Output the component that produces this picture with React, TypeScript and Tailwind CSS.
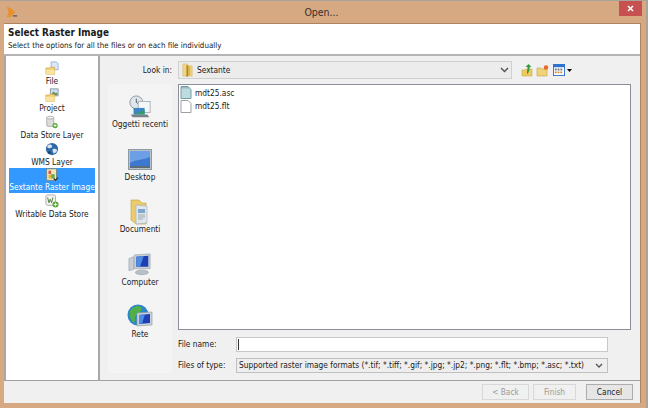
import React from 'react';

const FolderTall = ({ className = '' }: { className?: string }) => (
  <svg className={className} viewBox="0 0 14 15">
    <path d="M2 1h5l1 2h4v11H2z" fill="#f3d67f" stroke="#d6b55f" strokeWidth="0.6" />
    <path d="M6 2l4 2v9l-4 2z" fill="#dcb64e" />
    <path d="M6 2l1.500 1v11L6 15z" fill="#9a8440" />
  </svg>
);

const SidebarIcon = ({ kind }: { kind: string }) => {
  if (kind === 'file')
    return (
      <svg className="h-[14px] w-[14px]" viewBox="0 0 16 16">
        <path d="M7 1h6l2 2v7H7z" fill="#dbe8fa" stroke="#7f9fd0" strokeWidth="0.8" />
        <path d="M1 8h4l1-1h5v8H1z" fill="#f2cf73" stroke="#c9a23c" strokeWidth="0.7" />
        <path d="M1 10h10v5H1z" fill="#f9e3a0" />
      </svg>
    );
  if (kind === 'project')
    return (
      <svg className="h-[14px] w-[14px]" viewBox="0 0 16 16">
        <rect x="6" y="1" width="9" height="8" fill="#cfdcec" stroke="#6e7f95" strokeWidth="0.8" />
        <path d="M8 6l2-2 2 2 2-1v3H8z" fill="#5b8f5a" />
        <path d="M1 8h4l1-1h5v8H1z" fill="#f2cf73" stroke="#c9a23c" strokeWidth="0.7" />
        <path d="M1 10h10v5H1z" fill="#f9e3a0" />
      </svg>
    );
  if (kind === 'store')
    return (
      <svg className="h-[14px] w-[14px]" viewBox="0 0 16 16">
        <path d="M2 3v9c0 1.500 8 1.500 8 0V3z" fill="#dcdcdc" stroke="#9a9a9a" strokeWidth="0.8" />
        <ellipse cx="6" cy="3" rx="4" ry="1.600" fill="#f2f2f2" stroke="#9a9a9a" strokeWidth="0.8" />
        <circle cx="11.500" cy="12" r="3" fill="#5aa83c" />
        <path d="M9.800 12h3.400M11.500 10.300v3.400" stroke="#fff" strokeWidth="0.9" />
      </svg>
    );
  if (kind === 'wms')
    return (
      <svg className="h-[14px] w-[14px]" viewBox="0 0 16 16">
        <circle cx="8" cy="8" r="7" fill="#2f6aa8" />
        <path d="M3 4c2-2 4-1 5 0 1 2-1 3-3 3S2 6 3 4zM9 8c2-1 4 0 5 1-1 3-3 4-4 4-1-2-2-3-1-5z" fill="#d7e6f2" />
        <circle cx="5" cy="12" r="1.500" fill="#173f6e" />
      </svg>
    );
  if (kind === 'raster')
    return (
      <svg className="h-[14px] w-[14px]" viewBox="0 0 16 16">
        <rect x="2" y="1" width="11" height="13" fill="#f0e8b8" stroke="#7d7d60" strokeWidth="0.8" />
        <path d="M4 3h3v4H4z" fill="#d9534f" />
        <path d="M7 7h4v5H7z" fill="#67a84f" />
        <path d="M4 8h3v4H4z" fill="#e8b33c" />
        <path d="M10 12l2 2 3-3" stroke="#2d2d2d" strokeWidth="1.400" fill="none" />
      </svg>
    );
  return (
    <svg className="h-[14px] w-[14px]" viewBox="0 0 16 16">
      <rect x="1" y="1" width="11" height="12" rx="2" fill="#f2f2f2" stroke="#8f9a8f" strokeWidth="0.8" />
      <path d="M3 4l1.500 6L6 6l1.500 4L9 4" stroke="#4f7f3c" strokeWidth="1.100" fill="none" />
      <circle cx="12" cy="12" r="3.500" fill="#5aa83c" />
      <path d="M10 12h4M12 10v4" stroke="#fff" strokeWidth="1" />
    </svg>
  );
};

const PlaceIcon = ({ kind }: { kind: string }) => {
  if (kind === 'recent')
    return (
      <svg className="h-[24px] w-[26px]" viewBox="0 0 26 26">
        <circle cx="9" cy="8" r="7" fill="#dfe5ea" stroke="#8b949c" />
        <path d="M9 4v4l3 2" stroke="#4d5860" strokeWidth="1" fill="none" />
        <rect x="11" y="7" width="13" height="12" fill="#f4f7fa" stroke="#a9b2ba" />
        <path d="M6 14h12v7H6z" fill="#3f86c9" />
        <path d="M6 21l12-5v5z" fill="#2f9c6b" />
        <path d="M3 21h18l2 3H5z" fill="#77838c" />
      </svg>
    );
  if (kind === 'desktop')
    return (
      <svg className="h-[22px] w-6" viewBox="0 0 24 22">
        <rect x="0.500" y="0.500" width="23" height="20" fill="#b8c0c8" stroke="#8f99a3" />
        <rect x="2" y="2" width="20" height="15" fill="#3d78d0" />
        <path d="M2 2h20v6c-7 3-13 2-20 6z" fill="#6d9fe4" />
        <rect x="2" y="17" width="20" height="2" fill="#5d6b78" />
      </svg>
    );
  if (kind === 'docs')
    return (
      <svg className="h-[26px] w-6" viewBox="0 0 24 26">
        <path d="M3 1h8l3 3h4v21H8L3 21z" fill="#eccb6c" stroke="#c8a850" strokeWidth="0.7" />
        <path d="M8 6l11 1v17l-11 1z" fill="#dfe6ec" stroke="#aab4bc" strokeWidth="0.7" />
        <path d="M10 10h7v4h-7z" fill="#7fa6c9" />
        <path d="M10 16h7M10 18h7M10 20h5" stroke="#8d98a3" strokeWidth="0.8" />
      </svg>
    );
  if (kind === 'computer')
    return (
      <svg className="h-[24px] w-6" viewBox="0 0 24 26">
        <path d="M0 6l5-2v14l-5 1z" fill="#c8ced4" stroke="#8f99a3" strokeWidth="0.6" />
        <path d="M6 2l17-1v16L6 17z" fill="#c9d0d6" stroke="#8f99a3" strokeWidth="0.6" />
        <path d="M8 4l13-1v12L8 15z" fill="#1d3fb5" />
        <path d="M8 4l8-.500-4 11.300H8z" fill="#4f8be0" />
        <ellipse cx="14" cy="21" rx="7" ry="2.500" fill="#b9c0c6" stroke="#8f99a3" strokeWidth="0.6" />
      </svg>
    );
  return (
    <svg className="h-[26px] w-[26px]" viewBox="0 0 26 26">
      <circle cx="11" cy="11" r="10.500" fill="#2c86c9" />
      <path d="M3 7c3-5 8-6 11-4 2 3-1 6-4 7-3 3-1 6-3 9-3-2-5-7-4-12z" fill="#4fb04a" />
      <path d="M10 9l15-1v13l-15 1z" fill="#c9d0d6" stroke="#8f99a3" strokeWidth="0.6" />
      <path d="M12 11l11-1v9l-11 1z" fill="#1d3fb5" />
      <path d="M12 11l6-.500-3 9.300h-3z" fill="#4f8be0" />
    </svg>
  );
};

const sources = [
  { kind: 'file', label: 'File' },
  { kind: 'project', label: 'Project' },
  { kind: 'store', label: 'Data Store Layer' },
  { kind: 'wms', label: 'WMS Layer' },
  { kind: 'raster', label: 'Sextante Raster Image', selected: true },
  { kind: 'writable', label: 'Writable Data Store' },
];

const places = [
  { kind: 'recent', label: 'Oggetti recenti' },
  { kind: 'desktop', label: 'Desktop' },
  { kind: 'docs', label: 'Documenti' },
  { kind: 'computer', label: 'Computer' },
  { kind: 'net', label: 'Rete' },
];

export default function App() {
  return (
    <div className="flex h-[408px] w-[648px] flex-col overflow-hidden border-t border-r-2 border-[#a9a39c] bg-[#d7a982] pl-1 pr-[5px] pb-[5px] text-[8.300px] leading-none text-[#1a1a1a] [font-family:'DejaVu_Sans',sans-serif] [font-stretch:condensed]">
      {/* Title bar */}
      <div className="relative flex h-[22px] shrink-0 items-center justify-center pr-[2px] text-[10.500px] text-[#3a3028]">
        <svg className="absolute left-[2px] top-[5px] h-[12px] w-[12px]" viewBox="0 0 14 13">
          <path d="M1 0l6 3 4 4-3 2-2 3-5 1 2-6z" fill="#e8912d" />
          <path d="M8 10h5v2H8z" fill="#6f6f6f" />
        </svg>
        Open...
        <div className="absolute -right-[1px] -top-[1px] flex h-[16px] w-[23px] items-center justify-center bg-[#c75050]">
          <svg className="h-[7px] w-[7px]" viewBox="0 0 7 7">
            <path d="M1 1l5 5M6 1L1 6" stroke="#fff" strokeWidth="1.500" />
          </svg>
        </div>
      </div>

      <div className="flex min-h-0 flex-1 flex-col border-t border-r border-[#ab8562] bg-[#f0f0f0]">
        {/* Header */}
        <div className="h-[32px] shrink-0 border-b-2 border-[#b4b4b4] bg-white pl-1 pt-[2px]">
          <div className="text-[9.900px] font-bold leading-[13px]">Select Raster Image</div>
          <div className="mt-[1px] text-[7.900px] leading-[12px]">Select the options for all the files or on each file individually</div>
        </div>

        <div className="flex min-h-0 flex-1 border-b border-[#a0a0a0]">
          {/* Source list */}
          <div className="flex w-[96px] shrink-0 flex-col border-x-2 border-[#a8a8a8] bg-white px-[3px] pt-[4px]">
            {sources.map((s) => (
              <div
                key={s.label}
                className={`flex shrink-0 flex-col items-center whitespace-nowrap leading-[11px] ${s.selected ? 'h-[25px] bg-[#3399ff] text-white' : 'h-[27px]'}`}
              >
                <div className={`flex items-center ${s.selected ? 'h-[14px]' : 'h-4'}`}>
                  <SidebarIcon kind={s.kind} />
                </div>
                <span>{s.label}</span>
              </div>
            ))}
          </div>

          {/* Chooser */}
          <div className="flex min-w-0 flex-1 flex-col pl-2 pr-[9px] pt-[5px]">
            <div className="flex h-[18px] shrink-0 items-center">
              <div className="w-[64px] text-right">Look in:</div>
              <div className="ml-[6px] flex h-[18px] w-[334px] shrink-0 items-center border border-[#d0d0d0] bg-[#ececec] pl-[2px]">
                <FolderTall className="h-[14px] w-[13px]" />
                <span className="ml-[3px]">Sextante</span>
                <svg className="ml-auto mr-[2px] h-[7px] w-[9px]" viewBox="0 0 9 7">
                  <path d="M1 1l3.500 3.500L8 1" stroke="#555" strokeWidth="1.500" fill="none" />
                </svg>
              </div>
              <div className="ml-[9px] flex items-center gap-[2px]">
                <svg className="h-[13px] w-[13px]" viewBox="0 0 13 13">
                  <path d="M1 6h3l1-1h6v7H1z" fill="#eccb62" stroke="#c9a23c" strokeWidth="0.5" />
                  <path d="M7.500 0L4.500 3H6.500C7 5 5.500 7 6 10c1.500-1 3-4 2.500-7h2z" fill="#2f9a3a" />
                </svg>
                <svg className="h-[13px] w-[13px]" viewBox="0 0 13 13">
                  <path d="M1 4h4l1 1h5v7H1z" fill="#efd27a" stroke="#c9a23c" strokeWidth="0.6" />
                  <circle cx="10" cy="3.500" r="2.200" fill="#e8672d" />
                </svg>
                <svg className="ml-[2px] h-[12px] w-[12px]" viewBox="0 0 13 13">
                  <rect x="0.500" y="0.500" width="12" height="12" fill="#fff" stroke="#2f6fd0" />
                  <rect x="0.500" y="0.500" width="12" height="3" fill="#2f6fd0" />
                  <path d="M2 5h2v2H2zM5 5h2v2H5zM8 5h2v2H8z" fill="#6b7a8a" />
                  <path d="M2 8h2v2H2zM5 8h2v2H5zM8 8h2v2H8z" fill="#c98a3a" />
                </svg>
                <svg className="h-[3px] w-[5px]" viewBox="0 0 5 3">
                  <path d="M0 0h5L2.500 3z" fill="#000" />
                </svg>
              </div>
            </div>

            <div className="mt-[5px] flex min-h-0 flex-1 pb-[7px]">
              {/* Places bar */}
              <div className="flex w-[64px] shrink-0 flex-col items-center bg-[#f4f4f4] pt-[10px]">
                {places.map((p) => (
                  <div key={p.label} className="flex h-[52.500px] shrink-0 flex-col items-center whitespace-nowrap leading-[11px]">
                    <div className="flex h-[26px] items-center">
                      <PlaceIcon kind={p.kind} />
                    </div>
                    <span className="-mt-[1px]">{p.label}</span>
                  </div>
                ))}
              </div>

              <div className="ml-[6px] flex min-w-0 flex-1 flex-col">
                {/* File list */}
                <div className="min-h-0 flex-1 border border-[#8a8f9a] bg-white pl-px pt-px">
                  {['mdt25.asc', 'mdt25.flt'].map((name, i) => (
                    <div key={name} className="flex h-[13.500px] items-center gap-[3px]">
                      <svg className="h-[13px] w-[12px]" viewBox="0 0 12 13">
                        <path d="M1 .5h7l3 3v9H1z" fill={i === 0 ? '#bcdce0' : '#fff'} stroke={i === 0 ? '#7a9aa6' : '#a0a0a0'} />
                        {i === 0 && <path d="M2 1v1.500M4 1v1.500M6 1v1.500M8 1v1.500" stroke="#5a7a86" strokeWidth="0.7" />}
                      </svg>
                      <span>{name}</span>
                    </div>
                  ))}
                </div>
                {/* File name */}
                <div className="mt-[7px] flex h-[15px] shrink-0 items-center">
                  <div className="w-[58px] shrink-0">File name:</div>
                  <div className="flex h-full w-[372px] shrink-0 items-center border border-[#c8c8c8] bg-white pl-px">
                    <div className="h-[11px] w-px bg-[#333]" />
                  </div>
                </div>
                {/* Files of type */}
                <div className="mt-[6px] flex h-[15px] shrink-0 items-center">
                  <div className="w-[58px] shrink-0">Files of type:</div>
                  <div className="flex h-full w-[372px] shrink-0 items-center whitespace-nowrap border border-[#c0c0c0] bg-[#eeeeee] pl-[2px]">
                    Supported raster image formats (*.tif; *.tiff; *.gif; *.jpg; *.jp2; *.png; *.flt; *.bmp; *.asc; *.txt)
                    <svg className="ml-auto mr-[4px] h-[6px] w-[8px]" viewBox="0 0 8 6">
                      <path d="M1 1l3 3 3-3" stroke="#555" strokeWidth="1.300" fill="none" />
                    </svg>
                  </div>
                </div>
              </div>
            </div>
          </div>
        </div>

        {/* Buttons */}
        <div className="flex h-[22px] shrink-0 items-center justify-end pr-[7px]">
          <div className="flex h-[16px] w-[47px] items-center justify-center border border-[#d8d8d8] text-[#9a9a9a]">&lt; Back</div>
          <div className="ml-[4px] flex h-[16px] w-[43px] items-center justify-center border border-[#d8d8d8] text-[#9a9a9a]">Finish</div>
          <div className="ml-[10px] flex h-[16px] w-[47px] items-center justify-center border border-[#adadad] bg-[#e6e6e6]">Cancel</div>
        </div>
      </div>
    </div>
  );
}
